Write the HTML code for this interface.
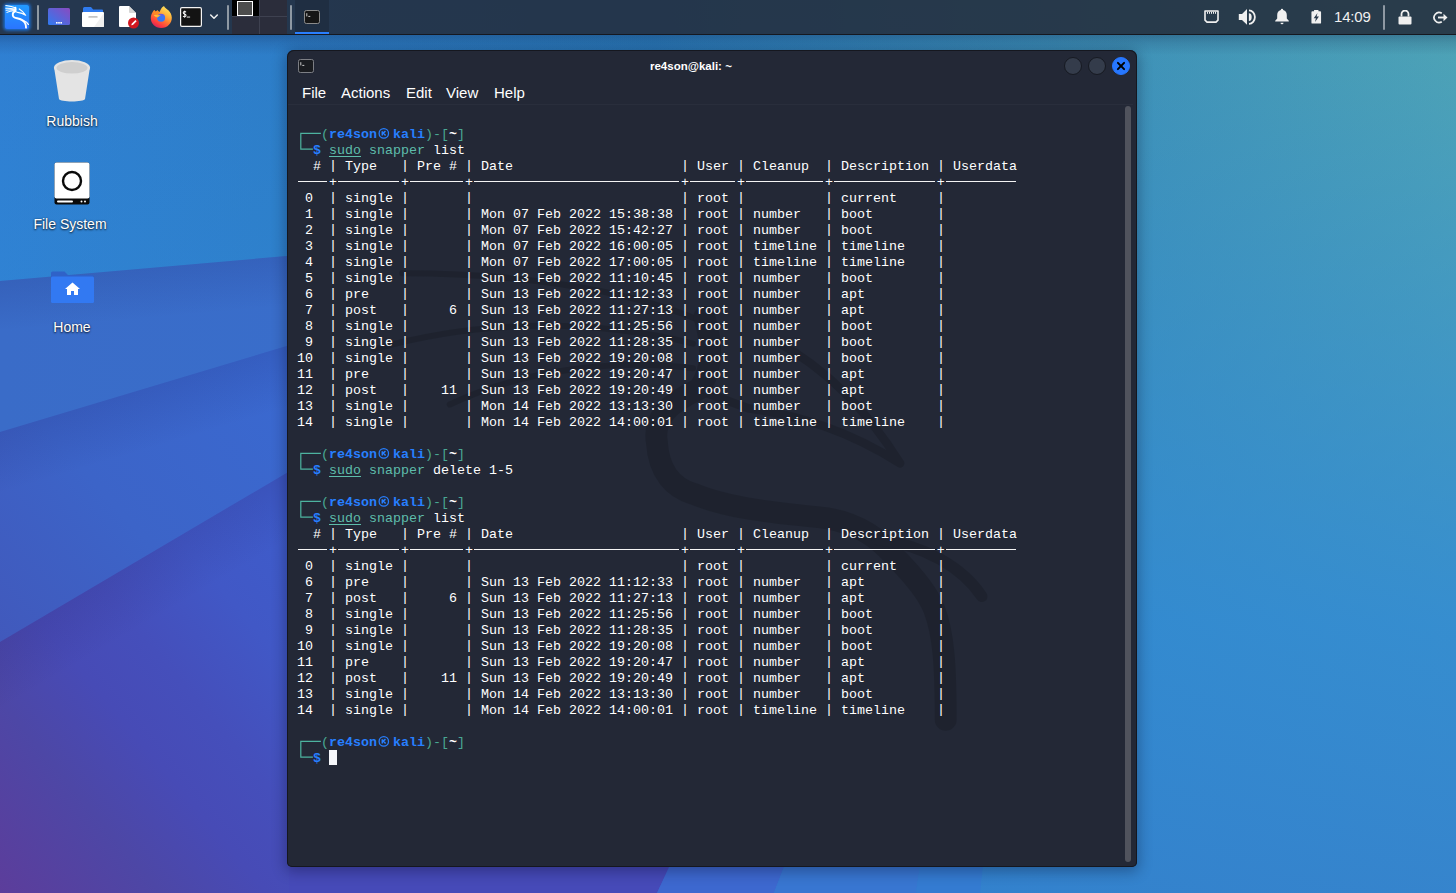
<!DOCTYPE html>
<html>
<head>
<meta charset="utf-8">
<title>re4son@kali: ~</title>
<style>
html,body{margin:0;padding:0;}
body{width:1456px;height:893px;overflow:hidden;position:relative;background:#3077c8;font-family:"Liberation Sans",sans-serif;}
#bg{position:absolute;left:0;top:0;width:1456px;height:893px;}
/* ---------- top panel ---------- */
#panel{position:absolute;left:0;top:0;width:1456px;height:34px;background:rgba(35,42,56,.85);border-bottom:1px solid #16181f;}
#panel .sep{position:absolute;top:5px;width:2px;height:25px;background:#8f99a3;border-radius:1px;}
#panel svg{position:absolute;}
#clock{position:absolute;left:1334px;top:7px;font-size:15px;line-height:20px;color:#f0f0f0;letter-spacing:-0.2px;}
/* ---------- desktop icons ---------- */
.dlabel{position:absolute;color:#fff;font-size:14px;line-height:18px;text-align:center;width:120px;text-shadow:0 1px 2px rgba(0,0,0,.75),0 0 2px rgba(0,0,0,.4);}
/* ---------- window ---------- */
#win{position:absolute;left:287px;top:50px;width:850px;height:817px;background:#232836;border-radius:7px 7px 5px 5px;box-shadow:inset 0 0 0 1px #15171f,0 3px 14px 2px rgba(0,0,25,.30);overflow:hidden;}
#title{position:absolute;left:0;top:0;width:850px;height:32px;text-align:center;color:#fff;font-weight:bold;font-size:11.5px;line-height:32px;}
#title span{position:absolute;left:363px;top:0;}
.wb{position:absolute;top:7px;width:16px;height:16px;border-radius:50%;background:#343c4b;border:1px solid #171a22;}
#menu{position:absolute;left:0;top:33px;height:20px;color:#fff;font-size:15px;line-height:20px;white-space:pre;}
#menu span{position:absolute;top:0;}
#msep{position:absolute;left:1px;top:54px;width:845px;height:1px;background:#292e3c;}
#sb{position:absolute;left:838px;top:56px;width:6px;height:756px;border-radius:3px;background:#50535d;}
#term{position:absolute;left:10px;top:61px;width:820px;color:#fff;font-family:"Liberation Mono",monospace;font-size:13.333px;line-height:16px;white-space:pre;}
#term .ln{height:16px;position:relative;}
#term .pr{position:relative;height:32px;}
#term .box{position:absolute;left:0;top:-2px;}
#term b{font-weight:bold;}
#term s{text-decoration:none;position:relative;top:-1.5px;}
.bl{color:#277fff;}
.g{color:#49a793;}
.g2{color:#5ebdab;}
.gu{color:#5ebdab;text-decoration:underline;text-underline-offset:2px;}
.w{color:#fff;}
.kk{display:inline-block;width:16px;height:16px;vertical-align:top;}
.hl{position:absolute;top:5.7px;height:1.2px;background:#f4f4f4;}
.cur{display:inline-block;width:8px;height:15px;background:#f6f7fb;vertical-align:top;margin-top:-1px;}
#dragon{position:absolute;left:0;top:55px;}
</style>
</head>
<body>
<!-- wallpaper -->
<svg id="bg" width="1456" height="893" viewBox="0 0 1456 893">
  <defs>
    <linearGradient id="g0" x1="0" y1="0" x2="1" y2="0">
      <stop offset="0" stop-color="#2f7fd2"/>
      <stop offset="0.45" stop-color="#2a7ab8"/>
      <stop offset="1" stop-color="#4fa4b4"/>
    </linearGradient>
    <linearGradient id="g1" x1="0" y1="0" x2="0" y2="1">
      <stop offset="0" stop-color="#3088d6" stop-opacity="0"/>
      <stop offset="0.7" stop-color="#3088d6" stop-opacity=".8"/>
      <stop offset="1" stop-color="#3280d0" stop-opacity=".88"/>
    </linearGradient>
    <linearGradient id="g2" x1="0" y1="0" x2="1" y2="0">
      <stop offset="0" stop-color="#3a6cc8"/>
      <stop offset="1" stop-color="#386fcd"/>
    </linearGradient>
    <linearGradient id="g3" gradientUnits="userSpaceOnUse" x1="290" y1="380" x2="0" y2="640">
      <stop offset="0" stop-color="#3a69d0"/>
      <stop offset="0.55" stop-color="#3c64c8"/>
      <stop offset="1" stop-color="#4159bc"/>
    </linearGradient>
    <linearGradient id="g4" gradientUnits="userSpaceOnUse" x1="0" y1="893" x2="350" y2="600">
      <stop offset="0" stop-color="#5c3d9b"/>
      <stop offset="0.27" stop-color="#4d47a6"/>
      <stop offset="0.45" stop-color="#474bb6"/>
      <stop offset="0.6" stop-color="#454fbb"/>
      <stop offset="0.8" stop-color="#4158c6"/>
      <stop offset="1" stop-color="#3e5cca"/>
    </linearGradient>
  <linearGradient id="s1" gradientUnits="userSpaceOnUse" x1="0" y1="281" x2="4.3" y2="331"><stop offset="0" stop-color="#14145a" stop-opacity=".12"/><stop offset="1" stop-color="#14145a" stop-opacity="0"/></linearGradient>
    <linearGradient id="s2" gradientUnits="userSpaceOnUse" x1="0" y1="432" x2="17" y2="489"><stop offset="0" stop-color="#14145a" stop-opacity=".13"/><stop offset="1" stop-color="#14145a" stop-opacity="0"/></linearGradient>
    <linearGradient id="s3" gradientUnits="userSpaceOnUse" x1="0" y1="642" x2="30" y2="693"><stop offset="0" stop-color="#20104a" stop-opacity=".11"/><stop offset="1" stop-color="#20104a" stop-opacity="0"/></linearGradient>
  </defs>
  <rect width="1456" height="893" fill="url(#g0)"/>
  <rect width="1456" height="893" fill="url(#g1)"/>
  <polygon points="0,281 700,220 700,893 0,893" fill="url(#g2)"/>
  <polygon points="0,281 700,220 700,893 0,893" fill="url(#s1)"/>
  <polygon points="0,432 700,222 700,893 0,893" fill="url(#g3)"/>
  <polygon points="0,432 700,222 700,893 0,893" fill="url(#s2)"/>
  <polygon points="0,642 700,229 700,800 657,893 0,893" fill="url(#g4)"/>
  <polygon points="0,642 700,229 700,800 657,893 0,893" fill="url(#s3)"/>
  <polygon points="289,862 672,862 657,893 289,893" fill="#464ab8"/>
  <polygon points="657,893 700,800 810,800 774,893" fill="#3d68cf"/>
  <polygon points="774,893 810,800 930,800 916,893" fill="#3876d1"/>
  <polygon points="916,893 930,800 990,800 980,893" fill="#347bd1"/>
</svg>

<div style="position:absolute;left:0;top:35px;width:1456px;height:20px;background:linear-gradient(rgba(10,20,60,.26),rgba(10,20,60,.12) 40%,rgba(10,20,60,0));"></div>
<!-- top panel -->
<div id="panel">
  <!-- kali menu -->
  <svg style="left:1px;top:1px" width="32" height="32" viewBox="0 0 32 32">
    <defs><linearGradient id="kg" x1="0" y1="0" x2="0" y2="1"><stop offset="0" stop-color="#229bff"/><stop offset="1" stop-color="#2a75ff"/></linearGradient>
    <filter id="glow" x="-30%" y="-30%" width="160%" height="160%"><feGaussianBlur stdDeviation="1.6"/></filter></defs>
    <rect x="2.500" y="2.500" width="27" height="27" rx="4" fill="#1a7cf0" opacity=".85" filter="url(#glow)"/>
    <rect x="4" y="4" width="24" height="24" rx="2.5" fill="url(#kg)"/>
    <path d="M4.800 4.600C8 5 11.500 5.600 14.200 6.800M4.800 7.200C8 7 11 7.400 13.800 8M5.200 9.300C8 8.600 11 8.600 13.600 8.900M6 11.400C8.500 10 11 9.500 13.800 9.700" stroke="#fff" stroke-width="1.050" fill="none" stroke-linecap="round"/>
    <path d="M18.200 7.900C20.800 9.300 22.900 11.400 24.700 14.300C22 12.600 19.500 11.800 16.700 11.400L14.500 10.600" stroke="#fff" stroke-width="1.100" fill="none" stroke-linecap="round" stroke-linejoin="round"/>
    <path d="M14.400 6.600C14.900 8.300 14.800 9.500 14.100 10.400C12.400 11.200 11.600 12.500 11.800 13.800C11.600 16 13.500 16.800 16 17.300C20 18.100 22.800 19.500 24.200 22.300C24.900 23.800 25.100 25.300 25 26.600" stroke="#fff" stroke-width="1.900" fill="none" stroke-linecap="round" stroke-linejoin="round"/>
    <path d="M22.300 19.500C25 20.400 26.700 21.900 27.400 23.400" stroke="#fff" stroke-width="1.300" fill="none" stroke-linecap="round"/>
  </svg>
  <div class="sep" style="left:37px"></div>
  <!-- show desktop -->
  <svg style="left:48px;top:8px" width="22" height="18" viewBox="0 0 22 18">
    <defs><linearGradient id="sd" x1="0" y1="1" x2="1" y2="0"><stop offset="0" stop-color="#2f7bf0"/><stop offset="1" stop-color="#8a4ac0"/></linearGradient></defs>
    <rect x="0" y="0" width="22" height="17" rx="1.5" fill="url(#sd)"/>
    <rect x="8" y="14" width="1.6" height="1.6" fill="#fff"/><rect x="10.2" y="14" width="1.6" height="1.6" fill="#fff"/><rect x="12.400" y="14" width="1.6" height="1.6" fill="#fff"/>
  </svg>
  <!-- file manager -->
  <svg style="left:82px;top:7px" width="22" height="21" viewBox="0 0 22 21">
    <path d="M1 1.500a1.500 1.500 0 0 1 1.500-1.500h6.500l2.200 2.600h8.800a1 1 0 0 1 1 1v4h-20z" fill="#2f7bf0"/>
    <rect x="0" y="5" width="22" height="15" rx="1" fill="#fff"/>
    <path d="M22 6v13a1 1 0 0 1-1 1h-9z" fill="#f0f0f0"/>
    <rect x="6.300" y="9" width="9.400" height="1.800" rx=".9" fill="#c4c4c4"/>
  </svg>
  <!-- text editor -->
  <svg style="left:118px;top:6px" width="22" height="24" viewBox="0 0 22 24">
    <path d="M1 1a1 1 0 0 1 1-1h9l7 7v13a1 1 0 0 1-1 1h-15a1 1 0 0 1-1-1z" fill="#fff"/>
    <path d="M11 0l7 7h-6a1 1 0 0 1-1-1z" fill="#d6d6d6"/>
    <circle cx="15.500" cy="17" r="5.500" fill="#d2161e"/>
    <path d="M13.300 19.300l.4-1.600 3.700-3.700 1.200 1.200-3.700 3.700z" fill="#fff"/>
  </svg>
  <!-- firefox -->
  <svg style="left:150px;top:5px" width="23" height="24" viewBox="0 0 23 24">
    <defs>
      <linearGradient id="ff1" gradientUnits="userSpaceOnUse" x1="17" y1="2" x2="5" y2="22"><stop offset="0" stop-color="#ffe45e"/><stop offset=".3" stop-color="#ffb53c"/><stop offset=".55" stop-color="#ff7b31"/><stop offset=".8" stop-color="#ff3d3e"/><stop offset="1" stop-color="#d6235e"/></linearGradient>
      <linearGradient id="ff2" x1="0" y1="0" x2="0" y2="1"><stop offset="0" stop-color="#7552d8"/><stop offset=".35" stop-color="#3e76f2"/><stop offset="1" stop-color="#2f7bf6"/></linearGradient>
      <linearGradient id="ff3" x1="0" y1="0" x2="1" y2="0"><stop offset="0" stop-color="#ffd03a"/><stop offset="1" stop-color="#ffa02c"/></linearGradient>
    </defs>
    <path d="M4.200 4.900L5.700 6.700L7.400 5.200C8 6 8.600 6.600 9.600 7C10.200 5.800 10.600 4.600 12 2.600C12.800 1.600 13.600 1.200 14.100 1.200C15 3 17 4.200 18.600 5.600C20.400 7.400 21.600 9.600 21.800 12.500C22 18 17.500 23 11.200 23C5 23 .8 18.500 .8 13C.8 10 1.800 7.500 4.200 4.900Z" fill="url(#ff1)"/>
    <circle cx="11.100" cy="12.800" r="4" fill="url(#ff2)"/>
    <path d="M3.800 10.300C6 9.500 8.500 9.700 10.900 10.300C9.600 11 8.600 11.500 7.600 12.400C6.200 12.200 4.800 11.500 3.800 10.300Z" fill="url(#ff3)"/>
    <path d="M4.200 4.900L5.700 6.700L7.400 5.200C8 6.400 9 7.400 10.400 8.200C8.800 8.600 7.400 9 6 10C4.800 9.600 3.600 8.400 3.200 6.800Z" fill="#ff8a24" opacity=".9"/>
  </svg>
  <!-- terminal launcher -->
  <svg style="left:180px;top:7px" width="22" height="20" viewBox="0 0 22 20">
    <rect x=".6" y=".6" width="20.800" height="18.800" rx="1.300" fill="#131313" stroke="#f4f4f4" stroke-width="1.200"/>
    <path d="M6 5.300C5.600 4.700 4.900 4.500 4.400 4.600C3.600 4.700 3.200 5.300 3.300 5.900C3.500 6.800 4.400 7 5 7.300C5.700 7.600 6.100 8.100 6 8.800C5.900 9.500 5.200 9.800 4.600 9.800C3.900 9.800 3.400 9.500 3.100 9" stroke="#fff" stroke-width="1.050" fill="none"/><path d="M4.650 3.600V10.800" stroke="#fff" stroke-width=".8"/><rect x="6.800" y="9.600" width="3.300" height=".9" fill="#fff"/>
  </svg>
  <svg style="left:209px;top:14px" width="10" height="6" viewBox="0 0 10 6"><path d="M1.700 1l3.300 3.300 3.300-3.300" stroke="#f0f0f0" stroke-width="1.500" fill="none" stroke-linecap="round" stroke-linejoin="round"/></svg>
  <div class="sep" style="left:227px"></div>
  <!-- workspace switcher -->
  <div style="position:absolute;left:232px;top:0;width:55px;height:34px;background:#2b2d3b;">
    <div style="position:absolute;left:0;top:0;width:27px;height:16px;background:#000;"></div>
    <div style="position:absolute;left:5px;top:1px;width:14px;height:13px;background:#4d4d4d;border:1px solid #fff;"></div>
    <div style="position:absolute;left:27px;top:0;width:1px;height:34px;background:#3e4150;"></div>
    <div style="position:absolute;left:0;top:16px;width:55px;height:1px;background:#3e4150;"></div>
  </div>
  <div class="sep" style="left:290px"></div>
  <!-- task button -->
  <div style="position:absolute;left:295px;top:0;width:34px;height:34px;background:#1f2e42;">
    <div style="position:absolute;left:0;top:32px;width:34px;height:2px;background:#2a7fff;"></div>
    <svg style="left:9px;top:10px" width="16" height="14" viewBox="0 0 16 14">
      <rect x=".5" y=".5" width="15" height="13" rx="1.800" fill="#161616" stroke="#8b8b8b" stroke-width="1"/>
      <path d="M2.800 3.200v3.200M4.300 6.400h2" stroke="#ddd" stroke-width=".9" fill="none"/>
    </svg>
  </div>
  <!-- tray: network -->
  <svg style="left:1204px;top:10px" width="15" height="13" viewBox="0 0 15 13">
    <path d="M1 1h13v9.2l-2 1.900h-9l-2-1.900z" fill="none" stroke="#f0f0f0" stroke-width="1.600" stroke-linejoin="round"/>
    <path d="M3.500 1.800v2M5.500 1.800v2M7.500 1.800v2M9.500 1.800v2M11.500 1.800v2" stroke="#f0f0f0" stroke-width="1"/>
  </svg>
  <!-- volume -->
  <svg style="left:1238px;top:8px" width="19" height="18" viewBox="0 0 19 18">
    <path d="M.8 6.100h3.200l5-5.100v15.700l-5-4.600h-3.200z" fill="#f0f0f0"/>
    <path d="M10.900 5.200A2.800 3.900 0 0 1 10.900 13z" fill="#f0f0f0"/>
    <path d="M11 2.300A5.900 6.800 0 0 1 11 15.900" stroke="#f0f0f0" stroke-width="1.800" fill="none"/>
  </svg>
  <!-- bell -->
  <svg style="left:1274px;top:8px" width="16" height="17" viewBox="0 0 16 17">
    <path d="M8 .8a1.200 1.200 0 0 1 1.200 1.200c2.300.6 3.600 2.500 3.600 5v3.500l2 2.300v.7h-13.600v-.7l2-2.300v-3.500c0-2.500 1.300-4.400 3.600-5a1.200 1.200 0 0 1 1.200-1.200z" fill="#f0f0f0"/>
    <path d="M6.500 14.800a1.500 1.500 0 0 0 3 0z" fill="#f0f0f0"/>
  </svg>
  <!-- battery -->
  <svg style="left:1311px;top:10px" width="10.500" height="14" viewBox="0 0 12 16">
    <path d="M3.500 0h5v1.500h2a1 1 0 0 1 1 1v12a1 1 0 0 1-1 1h-9a1 1 0 0 1-1-1v-12a1 1 0 0 1 1-1h2z" fill="#f0f0f0"/>
    <path d="M7.400 3.400l-4.300 6h2.500l-1 4.400 4.500-6.400h-2.700z" fill="#2a3a4c"/>
  </svg>
  <div id="clock">14:09</div>
  <div class="sep" style="left:1383px"></div>
  <!-- lock -->
  <svg style="left:1398px;top:10px" width="14" height="15" viewBox="0 0 14 15">
    <path d="M3.500 6.500v-2.500a3.500 3.500 0 0 1 7 0v2.500" stroke="#f0f0f0" stroke-width="1.800" fill="none"/>
    <rect x=".5" y="6.500" width="13" height="8" rx="1" fill="#f0f0f0"/>
  </svg>
  <!-- logout -->
  <svg style="left:1432px;top:11px" width="16" height="13" viewBox="0 0 16 13">
    <path d="M9.800 2.300a5 5 0 1 0 0 8.400" stroke="#f0f0f0" stroke-width="1.700" fill="none"/>
    <path d="M6 6.500h6.500" stroke="#f0f0f0" stroke-width="1.900"/>
    <path d="M11.500 2.800l4 3.700-4 3.700z" fill="#f0f0f0"/>
  </svg>
</div>

<!-- desktop icons -->
<svg style="position:absolute;left:52px;top:58px" width="40" height="46" viewBox="0 0 40 46">
  <path d="M2 9l5 32c.5 3.300 25.500 3.300 26 0l5-32z" fill="#e4e4e4"/>
  <ellipse cx="20" cy="9.500" rx="18" ry="7.500" fill="#e4e4e4"/>
  <ellipse cx="20" cy="9.800" rx="15.500" ry="5.800" fill="#cfcfcf"/>
</svg>
<div class="dlabel" style="left:12px;top:112px;">Rubbish</div>

<svg style="position:absolute;left:54px;top:162px" width="36" height="43" viewBox="0 0 36 43">
  <rect x=".5" y=".5" width="35" height="42" rx="2" fill="#0a0a0a"/>
  <rect x=".5" y=".5" width="35" height="36" rx="2" fill="#fff"/>
  <circle cx="18" cy="19" r="9" fill="none" stroke="#0a0a0a" stroke-width="2.400"/>
  <rect x="3" y="38.500" width="16" height="2" rx="1" fill="#fff"/>
  <circle cx="27.500" cy="39.500" r="1" fill="#fff"/><circle cx="31" cy="39.500" r="1" fill="#fff"/>
</svg>
<div class="dlabel" style="left:10px;top:215px;">File System</div>

<svg style="position:absolute;left:51px;top:271px" width="43" height="33" viewBox="0 0 43 33">
  <path d="M0 2a1.500 1.500 0 0 1 1.500-1.500h12l3.500 3.500h24.500a1.500 1.500 0 0 1 1.500 1.500v6h-43z" fill="#2f62c8"/>
  <rect x="0" y="5.500" width="43" height="26.500" rx="1.500" fill="#3279f2"/>
  <path d="M21.500 11.500l-7.500 6.500h2v6h4v-4h3v4h4v-6h2z" fill="#fff"/>
</svg>
<div class="dlabel" style="left:12px;top:318px;">Home</div>

<!-- terminal window -->
<div id="win">
  <svg style="position:absolute;left:11px;top:9px" width="16" height="14" viewBox="0 0 16 14">
    <rect x=".5" y=".5" width="15" height="13" rx="1.800" fill="#1a1c20" stroke="#7d7f85" stroke-width="1"/>
    <path d="M2.800 3.200v3.200M4.300 6.400h2" stroke="#ddd" stroke-width=".9" fill="none"/>
  </svg>
  <div id="title"><span>re4son@kali: ~</span></div>
  <div class="wb" style="left:777px"></div>
  <div class="wb" style="left:801px"></div>
  <div class="wb" style="left:825px;background:#2777ff;border-color:#2777ff;">
    <svg style="position:absolute;left:3px;top:3px" width="10" height="10" viewBox="0 0 10 10"><path d="M1.9 1.9l6.2 6.2" stroke="#000" stroke-width="2" stroke-linecap="round"/><path d="M8.1 1.9l-6.2 6.2" stroke="#000" stroke-width="2" stroke-linecap="round"/></svg>
  </div>
  <div id="menu"><span style="left:15px">File</span><span style="left:54px">Actions</span><span style="left:119px">Edit</span><span style="left:159px">View</span><span style="left:207px">Help</span></div>
  <div id="msep"></div>
  <svg id="dragon" width="850" height="762" viewBox="0 0 850 762">
    <g transform="translate(143.800 86.600) scale(19)" fill="none" stroke="#1c202b" stroke-linecap="round" stroke-linejoin="round" opacity=".68">
      <path d="M-1.500 4.300C4 4.300 10 5 14.200 6.800M-3 8.300C3 6.600 9 6.800 13.800 8M1 11.200C5 9.300 10 8.800 13.800 9.300" stroke-width=".32"/>
      <path d="M18.200 7.900C20.800 9.300 22.900 11.400 24.700 14.300C22 12.600 19.500 11.800 16.700 11.400L14.500 10.600" stroke-width=".45"/>
      <path d="M14.400 6.600C14.900 8.300 14.800 9.500 14.100 10.400C12.400 11.200 11.700 12 11.900 13.200C12 14.800 12.800 15.600 13.800 15.900C16 16.800 18.500 16.900 20.900 17.200C22.600 17.500 23.600 18.300 24.400 19.200C25.500 20.300 26.200 21.200 26.500 22C27 23.300 27.100 25 27.100 27.800" stroke-width="1.150"/>
      <path d="M23.500 18.300C26 18.600 28 19.800 29 21.300" stroke-width=".6"/>
    </g>
  </svg>
  <div id="sb"></div>
  <div id="term"><div class="ln"></div><div class="pr"><svg class="box" width="26" height="32" viewBox="0 0 26 32"><path d="M23.9 8.4H3.8V24.2H15.9" fill="none" stroke="#4db3a0" stroke-width="1.2"/></svg><div class="ln">   <span class="g">(</span><b class="bl">re4son</b><span class="kk"><svg width="16" height="16" viewBox="0 0 16 16"><circle cx="6.8" cy="6.4" r="4.7" fill="none" stroke="#277fff" stroke-width="1.3"/><path d="M5.3 4.2v4.4M8.5 4.2L5.5 6.7M6.4 6l2.2 2.6" stroke="#277fff" stroke-width="1.5" fill="none"/></svg></span><b class="bl">kali</b><span class="g">)-[</span><b class="w">~</b><span class="g">]</span></div><div class="ln">  <b class="bl">$</b> <span class="gu">sudo</span> <span class="g2">snapper</span> list</div></div><div class="ln">  # <s>|</s> Type   <s>|</s> Pre # <s>|</s> Date                     <s>|</s> User <s>|</s> Cleanup  <s>|</s> Description <s>|</s> Userdata</div><div class="ln sep"><i class="hl" style="left:0.5px;width:29.5px"></i><i class="hl" style="left:40.5px;width:61.5px"></i><i class="hl" style="left:112.5px;width:53.5px"></i><i class="hl" style="left:176.5px;width:205.5px"></i><i class="hl" style="left:392.5px;width:45.5px"></i><i class="hl" style="left:448.5px;width:77.5px"></i><i class="hl" style="left:536.5px;width:101.5px"></i><i class="hl" style="left:648.5px;width:70.0px"></i>    +        +       +                          +      +          +             +</div><div class="ln"> 0  <s>|</s> single <s>|</s>       <s>|</s>                          <s>|</s> root <s>|</s>          <s>|</s> current     <s>|</s></div><div class="ln"> 1  <s>|</s> single <s>|</s>       <s>|</s> Mon 07 Feb 2022 15:38:38 <s>|</s> root <s>|</s> number   <s>|</s> boot        <s>|</s></div><div class="ln"> 2  <s>|</s> single <s>|</s>       <s>|</s> Mon 07 Feb 2022 15:42:27 <s>|</s> root <s>|</s> number   <s>|</s> boot        <s>|</s></div><div class="ln"> 3  <s>|</s> single <s>|</s>       <s>|</s> Mon 07 Feb 2022 16:00:05 <s>|</s> root <s>|</s> timeline <s>|</s> timeline    <s>|</s></div><div class="ln"> 4  <s>|</s> single <s>|</s>       <s>|</s> Mon 07 Feb 2022 17:00:05 <s>|</s> root <s>|</s> timeline <s>|</s> timeline    <s>|</s></div><div class="ln"> 5  <s>|</s> single <s>|</s>       <s>|</s> Sun 13 Feb 2022 11:10:45 <s>|</s> root <s>|</s> number   <s>|</s> boot        <s>|</s></div><div class="ln"> 6  <s>|</s> pre    <s>|</s>       <s>|</s> Sun 13 Feb 2022 11:12:33 <s>|</s> root <s>|</s> number   <s>|</s> apt         <s>|</s></div><div class="ln"> 7  <s>|</s> post   <s>|</s>     6 <s>|</s> Sun 13 Feb 2022 11:27:13 <s>|</s> root <s>|</s> number   <s>|</s> apt         <s>|</s></div><div class="ln"> 8  <s>|</s> single <s>|</s>       <s>|</s> Sun 13 Feb 2022 11:25:56 <s>|</s> root <s>|</s> number   <s>|</s> boot        <s>|</s></div><div class="ln"> 9  <s>|</s> single <s>|</s>       <s>|</s> Sun 13 Feb 2022 11:28:35 <s>|</s> root <s>|</s> number   <s>|</s> boot        <s>|</s></div><div class="ln">10  <s>|</s> single <s>|</s>       <s>|</s> Sun 13 Feb 2022 19:20:08 <s>|</s> root <s>|</s> number   <s>|</s> boot        <s>|</s></div><div class="ln">11  <s>|</s> pre    <s>|</s>       <s>|</s> Sun 13 Feb 2022 19:20:47 <s>|</s> root <s>|</s> number   <s>|</s> apt         <s>|</s></div><div class="ln">12  <s>|</s> post   <s>|</s>    11 <s>|</s> Sun 13 Feb 2022 19:20:49 <s>|</s> root <s>|</s> number   <s>|</s> apt         <s>|</s></div><div class="ln">13  <s>|</s> single <s>|</s>       <s>|</s> Mon 14 Feb 2022 13:13:30 <s>|</s> root <s>|</s> number   <s>|</s> boot        <s>|</s></div><div class="ln">14  <s>|</s> single <s>|</s>       <s>|</s> Mon 14 Feb 2022 14:00:01 <s>|</s> root <s>|</s> timeline <s>|</s> timeline    <s>|</s></div><div class="ln"></div><div class="pr"><svg class="box" width="26" height="32" viewBox="0 0 26 32"><path d="M23.9 8.4H3.8V24.2H15.9" fill="none" stroke="#4db3a0" stroke-width="1.2"/></svg><div class="ln">   <span class="g">(</span><b class="bl">re4son</b><span class="kk"><svg width="16" height="16" viewBox="0 0 16 16"><circle cx="6.8" cy="6.4" r="4.7" fill="none" stroke="#277fff" stroke-width="1.3"/><path d="M5.3 4.2v4.4M8.5 4.2L5.5 6.7M6.4 6l2.2 2.6" stroke="#277fff" stroke-width="1.5" fill="none"/></svg></span><b class="bl">kali</b><span class="g">)-[</span><b class="w">~</b><span class="g">]</span></div><div class="ln">  <b class="bl">$</b> <span class="gu">sudo</span> <span class="g2">snapper</span> delete 1-5</div></div><div class="ln"></div><div class="pr"><svg class="box" width="26" height="32" viewBox="0 0 26 32"><path d="M23.9 8.4H3.8V24.2H15.9" fill="none" stroke="#4db3a0" stroke-width="1.2"/></svg><div class="ln">   <span class="g">(</span><b class="bl">re4son</b><span class="kk"><svg width="16" height="16" viewBox="0 0 16 16"><circle cx="6.8" cy="6.4" r="4.7" fill="none" stroke="#277fff" stroke-width="1.3"/><path d="M5.3 4.2v4.4M8.5 4.2L5.5 6.7M6.4 6l2.2 2.6" stroke="#277fff" stroke-width="1.5" fill="none"/></svg></span><b class="bl">kali</b><span class="g">)-[</span><b class="w">~</b><span class="g">]</span></div><div class="ln">  <b class="bl">$</b> <span class="gu">sudo</span> <span class="g2">snapper</span> list</div></div><div class="ln">  # <s>|</s> Type   <s>|</s> Pre # <s>|</s> Date                     <s>|</s> User <s>|</s> Cleanup  <s>|</s> Description <s>|</s> Userdata</div><div class="ln sep"><i class="hl" style="left:0.5px;width:29.5px"></i><i class="hl" style="left:40.5px;width:61.5px"></i><i class="hl" style="left:112.5px;width:53.5px"></i><i class="hl" style="left:176.5px;width:205.5px"></i><i class="hl" style="left:392.5px;width:45.5px"></i><i class="hl" style="left:448.5px;width:77.5px"></i><i class="hl" style="left:536.5px;width:101.5px"></i><i class="hl" style="left:648.5px;width:70.0px"></i>    +        +       +                          +      +          +             +</div><div class="ln"> 0  <s>|</s> single <s>|</s>       <s>|</s>                          <s>|</s> root <s>|</s>          <s>|</s> current     <s>|</s></div><div class="ln"> 6  <s>|</s> pre    <s>|</s>       <s>|</s> Sun 13 Feb 2022 11:12:33 <s>|</s> root <s>|</s> number   <s>|</s> apt         <s>|</s></div><div class="ln"> 7  <s>|</s> post   <s>|</s>     6 <s>|</s> Sun 13 Feb 2022 11:27:13 <s>|</s> root <s>|</s> number   <s>|</s> apt         <s>|</s></div><div class="ln"> 8  <s>|</s> single <s>|</s>       <s>|</s> Sun 13 Feb 2022 11:25:56 <s>|</s> root <s>|</s> number   <s>|</s> boot        <s>|</s></div><div class="ln"> 9  <s>|</s> single <s>|</s>       <s>|</s> Sun 13 Feb 2022 11:28:35 <s>|</s> root <s>|</s> number   <s>|</s> boot        <s>|</s></div><div class="ln">10  <s>|</s> single <s>|</s>       <s>|</s> Sun 13 Feb 2022 19:20:08 <s>|</s> root <s>|</s> number   <s>|</s> boot        <s>|</s></div><div class="ln">11  <s>|</s> pre    <s>|</s>       <s>|</s> Sun 13 Feb 2022 19:20:47 <s>|</s> root <s>|</s> number   <s>|</s> apt         <s>|</s></div><div class="ln">12  <s>|</s> post   <s>|</s>    11 <s>|</s> Sun 13 Feb 2022 19:20:49 <s>|</s> root <s>|</s> number   <s>|</s> apt         <s>|</s></div><div class="ln">13  <s>|</s> single <s>|</s>       <s>|</s> Mon 14 Feb 2022 13:13:30 <s>|</s> root <s>|</s> number   <s>|</s> boot        <s>|</s></div><div class="ln">14  <s>|</s> single <s>|</s>       <s>|</s> Mon 14 Feb 2022 14:00:01 <s>|</s> root <s>|</s> timeline <s>|</s> timeline    <s>|</s></div><div class="ln"></div><div class="pr"><svg class="box" width="26" height="32" viewBox="0 0 26 32"><path d="M23.9 8.4H3.8V24.2H15.9" fill="none" stroke="#4db3a0" stroke-width="1.2"/></svg><div class="ln">   <span class="g">(</span><b class="bl">re4son</b><span class="kk"><svg width="16" height="16" viewBox="0 0 16 16"><circle cx="6.8" cy="6.4" r="4.7" fill="none" stroke="#277fff" stroke-width="1.3"/><path d="M5.3 4.2v4.4M8.5 4.2L5.5 6.7M6.4 6l2.2 2.6" stroke="#277fff" stroke-width="1.5" fill="none"/></svg></span><b class="bl">kali</b><span class="g">)-[</span><b class="w">~</b><span class="g">]</span></div><div class="ln">  <b class="bl">$</b> <i class="cur"></i></div></div></div>
</div>
</body>
</html>
